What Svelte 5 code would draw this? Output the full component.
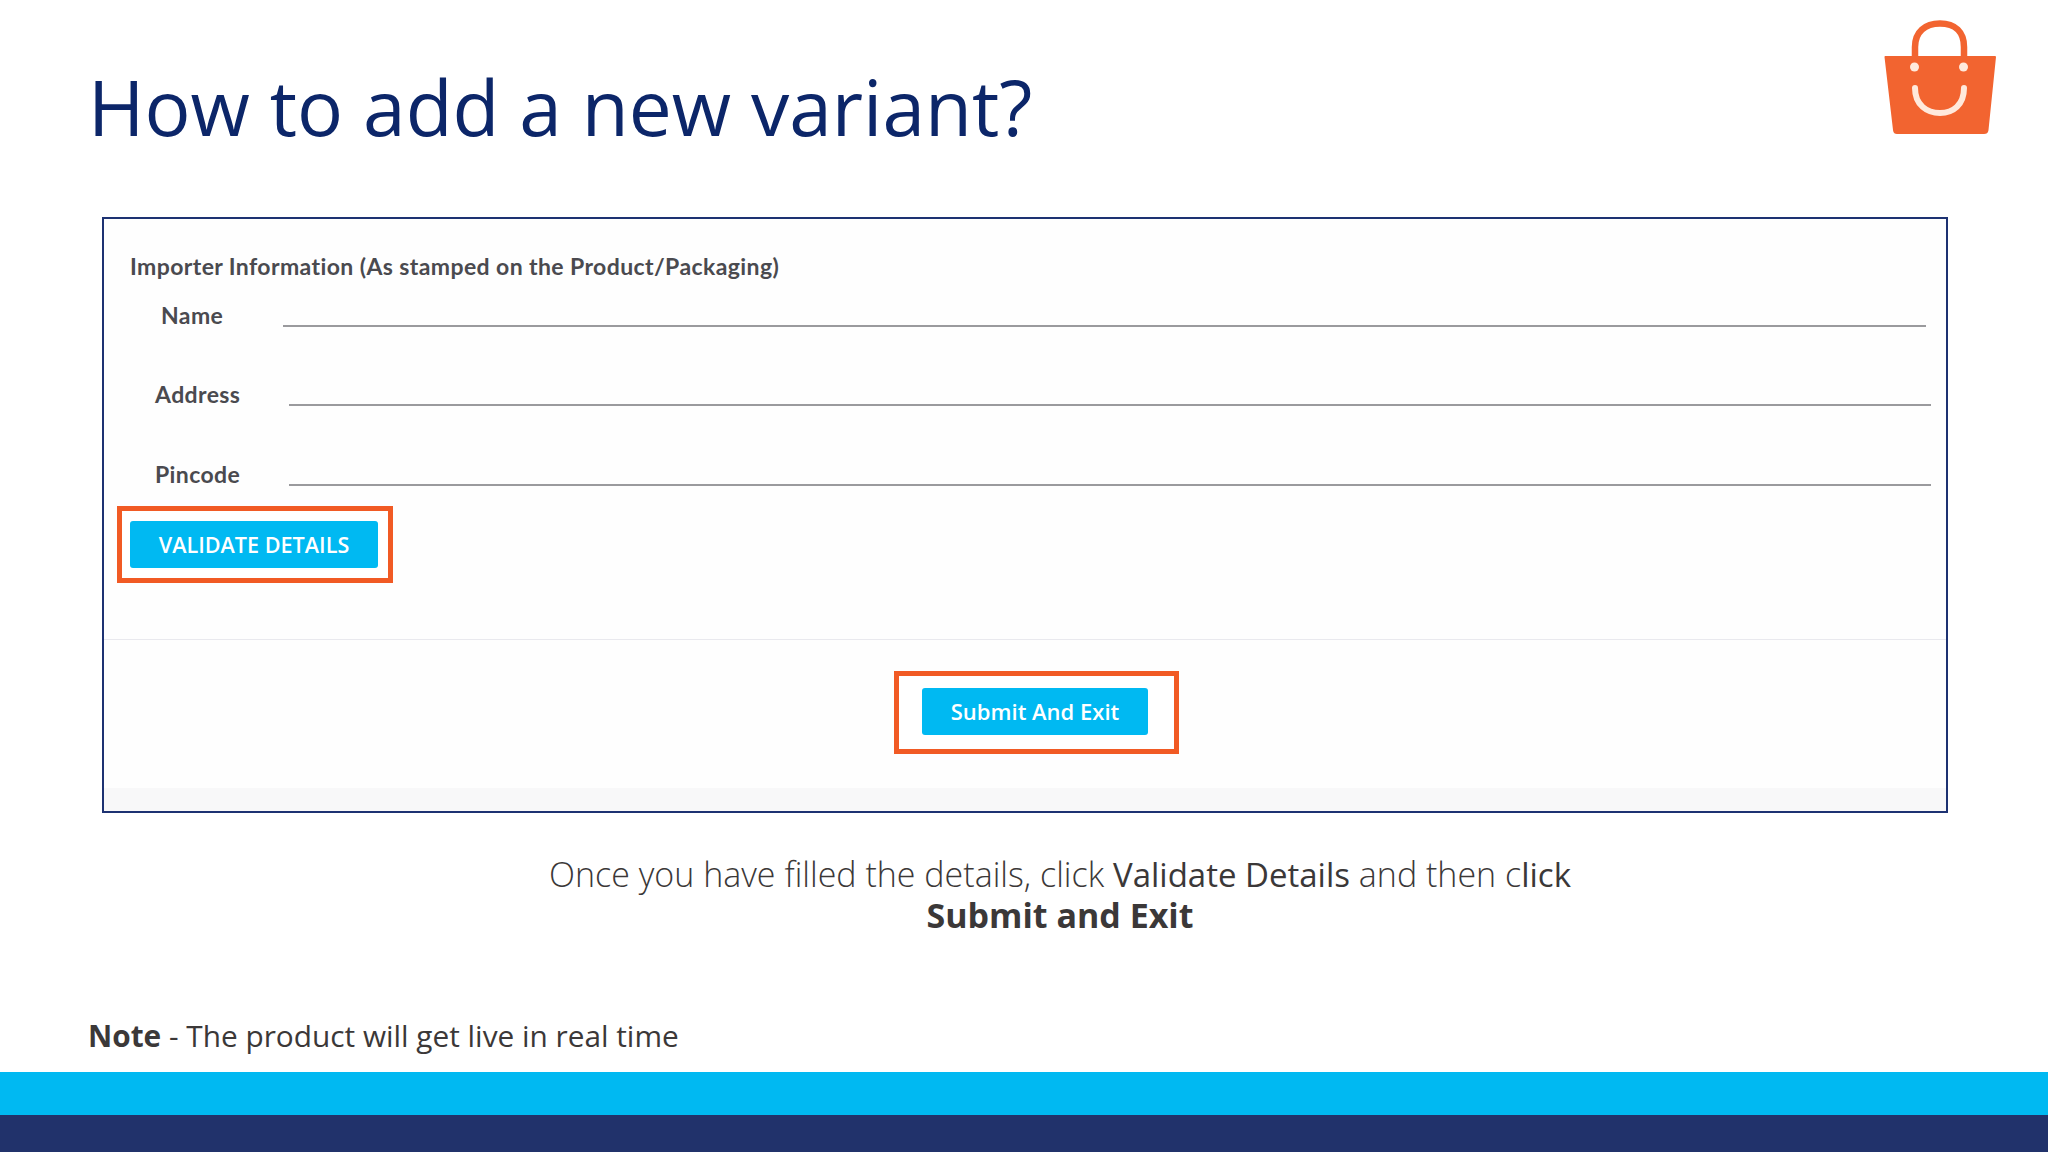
<script>
  const fields = [
    { label: 'Name', cls: 'name' },
    { label: 'Address', cls: 'addr' },
    { label: 'Pincode', cls: 'pin' }
  ];
</script>

<div class="slide">
  <header class="head">
    <h1>How to add a new variant?</h1>
    <svg class="bag" viewBox="0 0 112 114" width="112" height="114" aria-hidden="true">
      <path d="M31 38V27C31 12 41 3.500 56 3.500S80 12 80 27V38" fill="none" stroke="#f26430" stroke-width="6.500"/>
      <path d="M1.500 37H111L103.500 110Q103 113 100 113H13Q10.500 113 10 110Z" fill="#f26430" stroke="#f26430" stroke-width="2" stroke-linejoin="round"/>
      <circle cx="30.500" cy="47" r="4.500" fill="#ffe9dc"/>
      <circle cx="79.500" cy="47" r="4.500" fill="#ffe9dc"/>
      <path d="M31 68C31 85 43 93 56 93S80 85 80 68" fill="none" stroke="#ffe9dc" stroke-width="6" stroke-linecap="round"/>
    </svg>
  </header>

  <section class="card">
    <div class="form">
      <h2>Importer Information (As stamped on the Product/Packaging)</h2>
      {#each fields as f}
        <div class="row {f.cls}">
          <span class="label">{f.label}</span>
          <span class="line"></span>
        </div>
      {/each}
      <div class="mark validate"><button>VALIDATE DETAILS</button></div>
    </div>
    <div class="actions">
      <div class="mark submit"><button>Submit And Exit</button></div>
    </div>
    <div class="strip"></div>
  </section>

  <p class="caption">
    Once you have filled the details, click <span class="reg">Validate Details</span> and then c<span class="reg">lick</span><br />
    <strong>Submit and Exit</strong>
  </p>

  <p class="note"><strong>Note</strong> - The product will get live in real time</p>

  <div class="bars">
    <div class="cyan"></div>
    <div class="navy"></div>
  </div>
</div>

<style>
  :global(body) {
    margin: 0;
    background: #fff;
  }
  .slide {
    width: 2048px;
    height: 1152px;
    display: flex;
    flex-direction: column;
    overflow: hidden;
    font-family: "Open Sans", "Liberation Sans", sans-serif;
    background: #fff;
  }
  .head {
    height: 217px;
    box-sizing: border-box;
    padding: 20px 52px 0 88px;
    display: flex;
    justify-content: space-between;
    align-items: flex-start;
    flex: none;
  }
  h1 {
    margin: 36px 0 0;
    font-size: 76.600px;
    line-height: 100px;
    font-weight: 400;
    color: #0c2669;
  }
  .bag {
    display: block;
  }
  .card {
    width: 1846px;
    height: 596px;
    flex: none;
    margin-left: 102px;
    box-sizing: border-box;
    border: 2px solid #1d3272;
    background: #fefefe;
    display: flex;
    flex-direction: column;
  }
  .form {
    height: 421px;
    flex: none;
    box-sizing: border-box;
    padding: 32px 0 0 13px;
    border-bottom: 1px solid #e9e9ee;
    font-family: Lato, "Open Sans", sans-serif;
    color: #4a4a4f;
  }
  h2 {
    margin: 0 0 0 13px;
    font-size: 23px;
    line-height: 30px;
    font-weight: 700;
    letter-spacing: 0.4px;
  }
  .row {
    display: flex;
    align-items: flex-start;
    box-sizing: border-box;
  }
  .name {
    height: 49px;
    padding: 0 20px 0 44px;
    margin-top: 19px;
  }
  .addr,
  .pin {
    padding: 0 15px 0 38px;
    height: 80px;
  }
  .addr {
    padding-top: 30px;
    height: 79px;
  }
  .pin {
    padding-top: 31px;
  }
  .label {
    font-size: 23px;
    line-height: 30px;
    font-weight: 700;
    letter-spacing: 0.4px;
  }
  .name .label {
    width: 122px;
  }
  .addr .label,
  .pin .label {
    width: 134px;
  }
  .line {
    flex: 1;
    height: 2px;
    background: #9a9a9d;
    margin-top: 25px;
  }
  .mark {
    border: 5px solid #f15a24;
    box-sizing: border-box;
    background: #fff;
    display: flex;
  }
  .validate {
    width: 276px;
    height: 77px;
    margin: -2px 0 0 0;
    padding: 10px 0 0 8px;
  }
  button {
    border: 0;
    border-radius: 3px;
    background: #00b9f2;
    color: #fff;
    padding: 0;
    font-family: "Open Sans", sans-serif;
    height: 47px;
    line-height: 47px;
  }
  .validate button {
    width: 248px;
    font-size: 21.600px;
    font-weight: 600;
  }
  .actions {
    flex: 1;
    box-sizing: border-box;
    padding: 31px 0 0 790px;
  }
  .submit {
    width: 285px;
    height: 83px;
    padding: 12px 0 0 23px;
  }
  .submit button {
    width: 226px;
    font-size: 22px;
    font-weight: 600;
  }
  .strip {
    height: 23px;
    flex: none;
    background: #f8f8f9;
  }
  .caption {
    margin: 41px 0 0 72px;
    text-align: center;
    font-size: 34px;
    line-height: 41px;
    font-weight: 300;
    color: #3b3838;
    flex: none;
  }
  .reg {
    font-size: 33px;
    font-weight: 400;
  }
  .caption strong,
  .note strong {
    font-weight: 700;
  }
  .note {
    margin: 78px 0 0 88px;
    font-size: 29.800px;
    line-height: 44px;
    font-weight: 400;
    color: #3b3838;
    flex: none;
  }
  .bars {
    margin-top: auto;
    flex: none;
  }
  .cyan {
    height: 43px;
    background: #00b9f2;
  }
  .navy {
    height: 37px;
    background: #21326b;
  }
</style>
